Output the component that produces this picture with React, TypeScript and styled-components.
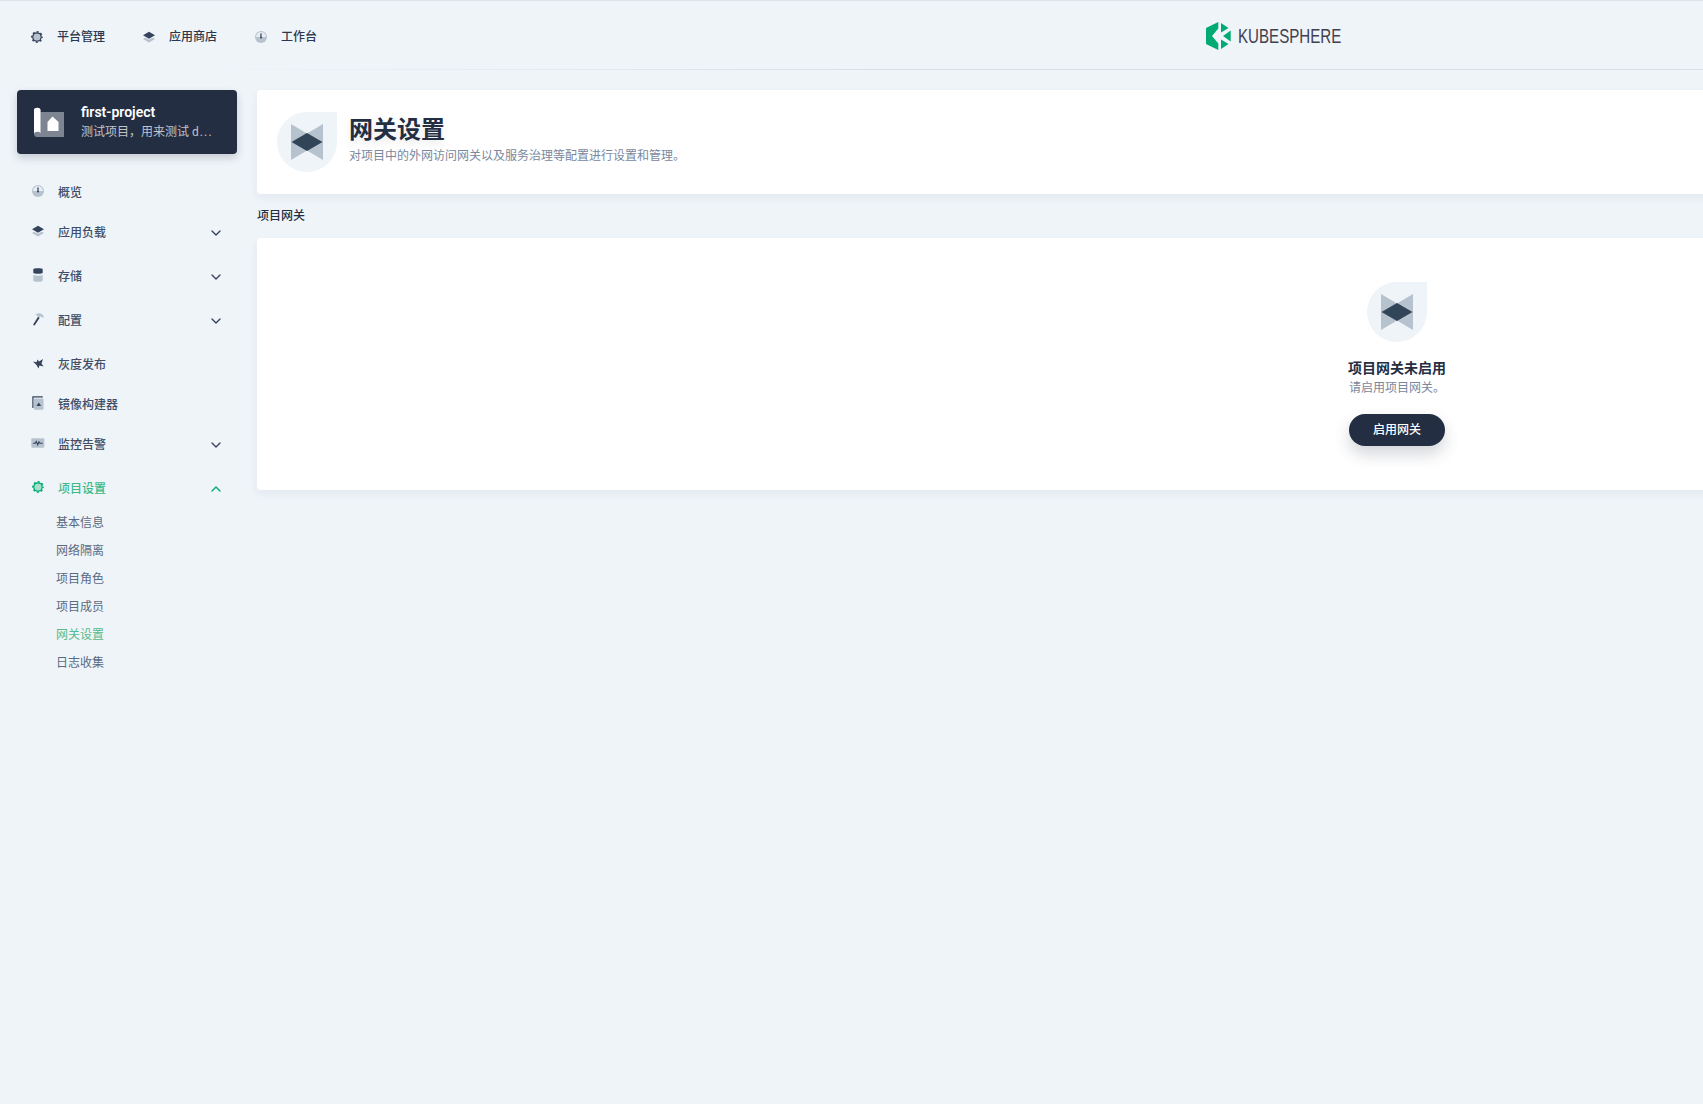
import React, { FC } from 'react';
import styled, { createGlobalStyle } from 'styled-components';
import { ChevronDown, ChevronUp } from 'lucide-react';

const GlobalStyle = createGlobalStyle`
  html, body {
    margin: 0;
    padding: 0;
    height: 100%;
    overflow: hidden;
    background: #eff4f9;
  }
  body {
    font-family: Roboto, 'Noto Sans CJK SC', sans-serif;
    font-size: 12px;
    color: #242e42;
  }
`;

const DARK = '#36435c';
const LIGHT = '#b6c2cd';
const GREEN = '#00aa72';

const Page = styled.div`
  width: 2546px;
  min-height: 1104px;
  background: #eff4f9;
`;

const TopBar = styled.header`
  position: relative;
  display: flex;
  align-items: center;
  height: 70px;
  box-sizing: border-box;
  padding: 2px 0 0 29px;
  border-top: 1px solid #dde3e9;
  background: #eff4f9;
  &::after {
    content: '';
    position: absolute;
    left: 0;
    right: 0;
    bottom: 0;
    height: 1px;
    background: linear-gradient(
      90deg,
      rgba(216, 222, 229, 0) 7%,
      #d8dee5 36%,
      #d8dee5 64%,
      rgba(216, 222, 229, 0) 93%
    );
  }
`;

const TopNav = styled.nav`
  display: flex;
  gap: 36px;
`;

const TopLink = styled.a`
  display: flex;
  align-items: center;
  gap: 12px;
  font-size: 12px;
  font-weight: 500;
  line-height: 20px;
  color: #2c374d;
`;

const Logo = styled.div`
  position: absolute;
  left: 1206px;
  top: 21px;
  display: flex;
  align-items: center;
  gap: 7px;
  height: 28px;
`;

const LogoText = styled.span`
  display: inline-block;
  font-family: 'Liberation Sans', sans-serif;
  font-size: 21px;
  line-height: 28px;
  color: #423f4f;
  transform: scaleX(0.72);
  transform-origin: left center;
`;

const Body = styled.div`
  display: flex;
  padding: 20px 9px 0 17px;
`;

const Sidebar = styled.aside`
  flex: none;
  width: 220px;
  margin-right: 20px;
`;

const ProjectCard = styled.div`
  display: flex;
  align-items: center;
  gap: 17px;
  height: 64px;
  box-sizing: border-box;
  padding: 0 17px;
  border-radius: 4px;
  background: #242e42;
  box-shadow: 0 4px 8px 0 rgba(36, 46, 66, 0.2);
`;

const ProjectText = styled.div`
  min-width: 0;
`;

const ProjectName = styled.div`
  margin-bottom: 1px;
  font-size: 14px;
  font-weight: 600;
  line-height: 19px;
  color: #fff;
`;

const ProjectDesc = styled.div`
  font-size: 12px;
  line-height: 19px;
  color: rgba(255, 255, 255, 0.72);
  white-space: nowrap;
`;

const Dots = styled.span`
  margin-left: 1px;
  letter-spacing: 1.2px;
`;

const Nav = styled.nav`
  margin-top: 17px;
`;

const NavRow = styled.a<{ $active?: boolean; $expandable?: boolean }>`
  display: flex;
  align-items: center;
  gap: 12px;
  height: 40px;
  padding: 0 13px 0 13px;
  margin-bottom: ${(p) => (p.$expandable ? '4px' : '0')};
  font-size: 12px;
  font-weight: 500;
  color: ${(p) => (p.$active ? '#3cb98a' : '#404e68')};
`;

const NavLabel = styled.span`
  flex: 1;
`;

const Caret = styled.span<{ $active?: boolean }>`
  display: flex;
  margin-top: 3px;
  color: ${(p) => (p.$active ? GREEN : DARK)};
`;

const SubNav = styled.div`
  margin-top: -2px;
`;

const SubRow = styled.a<{ $active?: boolean }>`
  display: block;
  height: 28px;
  padding-left: 39px;
  font-size: 12px;
  line-height: 28px;
  color: ${(p) => (p.$active ? '#55bc8a' : '#5a6a82')};
`;

const Main = styled.main`
  flex: 1;
  min-width: 0;
`;

const HeadCard = styled.section`
  display: flex;
  align-items: center;
  gap: 12px;
  height: 104px;
  box-sizing: border-box;
  padding: 0 20px;
  border-radius: 4px;
  background: #fff;
  box-shadow: 0 4px 8px 0 rgba(36, 46, 66, 0.06);
`;

const Drop = styled.div`
  flex: none;
  width: 60px;
  height: 60px;
  border-radius: 50% 0 50% 50%;
  background: #eff4f9;
`;

const HeadText = styled.div`
  margin-bottom: 4px;
`;

const HeadTitle = styled.h1`
  margin: 0;
  font-size: 24px;
  font-weight: 700;
  line-height: 32px;
  color: #242e42;
  text-shadow: 0 4px 8px rgba(36, 46, 66, 0.1);
`;

const HeadDesc = styled.p`
  margin: 0;
  font-size: 12px;
  line-height: 20px;
  color: #79879c;
`;

const SectionTitle = styled.h2`
  margin: 12px 0 12px;
  font-size: 12px;
  font-weight: 500;
  line-height: 20px;
  color: #242e42;
`;

const EmptyCard = styled.section`
  display: flex;
  flex-direction: column;
  align-items: center;
  height: 252px;
  box-sizing: border-box;
  padding-top: 44px;
  border-radius: 4px;
  background: #fff;
  box-shadow: 0 4px 8px 0 rgba(36, 46, 66, 0.06);
`;

const EmptyTitle = styled.div`
  margin-top: 16px;
  font-size: 14px;
  font-weight: 600;
  line-height: 20px;
  color: #242e42;
`;

const EmptyDesc = styled.div`
  margin-top: 1px;
  font-size: 12px;
  line-height: 18px;
  color: #79879c;
`;

const EnableButton = styled.button`
  width: 96px;
  height: 32px;
  margin-top: 17px;
  padding: 0 0 3px;
  border: 0;
  border-radius: 16px;
  background: #242e42;
  box-shadow: 0 8px 16px 0 rgba(36, 46, 66, 0.2);
  font-family: inherit;
  font-size: 12px;
  font-weight: 500;
  color: #fff;
`;

const Svg: FC<{ children: React.ReactNode; size?: number }> = ({ children, size = 16 }) => (
  <svg width={size} height={size} viewBox="0 0 16 16" style={{ flex: 'none', display: 'block' }}>
    {children}
  </svg>
);

const GearIcon: FC<{ color?: string; inner?: string }> = ({ color = DARK, inner = LIGHT }) => (
  <Svg>
    <circle
      cx="8"
      cy="8"
      r="5.2"
      fill="none"
      stroke={color}
      strokeWidth="1.4"
      strokeDasharray="2.04 2.04"
      strokeDashoffset="1.02"
    />
    <circle cx="8" cy="8" r="4.1" fill="none" stroke={color} strokeWidth="1.5" />
    <circle cx="8" cy="8" r="3.3" fill={inner} />
  </Svg>
);

const LayersIcon = () => (
  <Svg>
    <path d="M2 10 4.300 8.800 8 10.800l3.700-2 2.300 1.200-6 3.600z" fill={LIGHT} />
    <path d="M8 2.700 14 6.200 8 9.700 2 6.200z" fill={DARK} />
  </Svg>
);

const DashboardIcon = () => (
  <Svg>
    <circle cx="8" cy="8" r="6" fill={LIGHT} />
    <path d="M3 8a5 5 0 0 1 10 0z" fill="#e6ecf2" />
    <path d="M7.300 4.500h1.400L8.400 9H7.600z" fill={DARK} />
    <circle cx="8" cy="8.600" r="1" fill={DARK} />
  </Svg>
);

const StorageIcon = () => (
  <Svg>
    <path d="M3.300 7.800c1 .6 2.900.9 4.700.9s3.700-.3 4.700-.9V13.400c0 .9-2.100 1.400-4.700 1.400s-4.700-.5-4.700-1.400z" fill={LIGHT} />
    <path d="M3.300 2.200c0-.7 2.100-1 4.700-1s4.700.3 4.700 1V5.800c0 .6-2.100 1-4.700 1s-4.700-.4-4.700-1z" fill={DARK} />
  </Svg>
);

const HammerIcon = () => (
  <Svg>
    <path d="M5.500 3.600C7.500 2 10 2 12 3.200L14.300 6l-1.600.6L10 5.300 9.500 7 7.500 5z" fill={LIGHT} />
    <path d="M3.200 13.500 8 5.800l1.600 1.100-4.800 7.400c-.5.400-1.400 0-1.600-.8z" fill={DARK} />
  </Svg>
);

const BirdIcon = () => (
  <Svg>
    <path d="M3 6.500 6.500 7.200 7.500 4.500 9 6.500 13 4 11.500 8.500 13.500 11.500 9.500 10.500 8.500 13.500 6.500 10z" fill={DARK} />
  </Svg>
);

const BuilderIcon = () => (
  <Svg>
    <path d="M2.300 1.300h10.500v1.200H3.500V13H2.300z" fill={DARK} />
    <rect x="4" y="3.500" width="9.500" height="11.200" rx="1" fill={LIGHT} />
    <path d="M8.800 7.500 11.200 11H6.400z" fill={DARK} />
  </Svg>
);

const MonitorIcon = () => (
  <Svg>
    <rect x="1.300" y="3.300" width="13" height="9.400" rx="1" fill={LIGHT} />
    <path d="M3 8.200h2.300l1-1.800 1.400 3.400 1.300-3 .9 1.400h2.800" fill="none" stroke={DARK} strokeWidth="1.100" />
  </Svg>
);

const ProjectIcon = () => (
  <svg width="30" height="30" viewBox="0 0 30 30" style={{ flex: 'none', display: 'block' }}>
    <path d="M0 24V3c0-3 6.500-3 6.500 0v2H30v25H3c-2 0-3-1.500-3-3z" fill="#7e8592" />
    <path d="M0 27c0-3 6.500-3 6.500-.500V3C6.500 0 0 0 0 3z" fill="#fff" />
    <path d="M18.500 9.500 24.500 15v9h-11v-9z" fill="#fff" />
  </svg>
);

const GatewayMark = () => (
  <svg width="60" height="60" viewBox="0 0 60 60" style={{ display: 'block' }}>
    <path d="M14 12 30 21.500 46 12v36L30 38.500 14 48z" fill="#b6c2cd" />
    <path d="M14.500 30 30 21 45.500 30 30 39z" fill="#324558" />
  </svg>
);

const KsLogo = () => (
  <svg width="25" height="28" viewBox="0 0 25 28" style={{ flex: 'none', display: 'block' }}>
    <path d="M0 6 12.300 0v6.500L6 14l6.300 7.500V28L0 22z" fill={GREEN} />
    <path d="M15 1l7.500 5L15 10.500zM15 17.500 22.500 22 15 27zM24.700 8.500v11L17 14z" fill={GREEN} />
  </svg>
);

const Caretted: FC<{ open?: boolean; active?: boolean }> = ({ open, active }) => (
  <Caret $active={active}>{open ? <ChevronUp size={16} /> : <ChevronDown size={16} />}</Caret>
);

const subItems = ['基本信息', '网络隔离', '项目角色', '项目成员', '网关设置', '日志收集'];

const App: FC = () => (
  <Page>
    <GlobalStyle />
    <TopBar>
      <TopNav>
        <TopLink>
          <GearIcon />
          平台管理
        </TopLink>
        <TopLink>
          <LayersIcon />
          应用商店
        </TopLink>
        <TopLink>
          <DashboardIcon />
          工作台
        </TopLink>
      </TopNav>
      <Logo>
        <KsLogo />
        <LogoText>KUBESPHERE</LogoText>
      </Logo>
    </TopBar>
    <Body>
      <Sidebar>
        <ProjectCard>
          <ProjectIcon />
          <ProjectText>
            <ProjectName>first-project</ProjectName>
            <ProjectDesc>
              {'测试项目\uFF0C用来测试 d'}
              <Dots>...</Dots>
            </ProjectDesc>
          </ProjectText>
        </ProjectCard>
        <Nav>
          <NavRow>
            <DashboardIcon />
            <NavLabel>概览</NavLabel>
          </NavRow>
          <NavRow $expandable>
            <LayersIcon />
            <NavLabel>应用负载</NavLabel>
            <Caretted />
          </NavRow>
          <NavRow $expandable>
            <StorageIcon />
            <NavLabel>存储</NavLabel>
            <Caretted />
          </NavRow>
          <NavRow $expandable>
            <HammerIcon />
            <NavLabel>配置</NavLabel>
            <Caretted />
          </NavRow>
          <NavRow>
            <BirdIcon />
            <NavLabel>灰度发布</NavLabel>
          </NavRow>
          <NavRow>
            <BuilderIcon />
            <NavLabel>镜像构建器</NavLabel>
          </NavRow>
          <NavRow $expandable>
            <MonitorIcon />
            <NavLabel>监控告警</NavLabel>
            <Caretted />
          </NavRow>
          <NavRow $active $expandable>
            <GearIcon color={GREEN} inner="#a5e0c8" />
            <NavLabel>项目设置</NavLabel>
            <Caretted open active />
          </NavRow>
          <SubNav>
            {subItems.map((item) => (
              <SubRow key={item} $active={item === '网关设置'}>
                {item}
              </SubRow>
            ))}
          </SubNav>
        </Nav>
      </Sidebar>
      <Main>
        <HeadCard>
          <Drop>
            <GatewayMark />
          </Drop>
          <HeadText>
            <HeadTitle>网关设置</HeadTitle>
            <HeadDesc>对项目中的外网访问网关以及服务治理等配置进行设置和管理。</HeadDesc>
          </HeadText>
        </HeadCard>
        <SectionTitle>项目网关</SectionTitle>
        <EmptyCard>
          <Drop>
            <GatewayMark />
          </Drop>
          <EmptyTitle>项目网关未启用</EmptyTitle>
          <EmptyDesc>请启用项目网关。</EmptyDesc>
          <EnableButton>启用网关</EnableButton>
        </EmptyCard>
      </Main>
    </Body>
  </Page>
);

export default App;
